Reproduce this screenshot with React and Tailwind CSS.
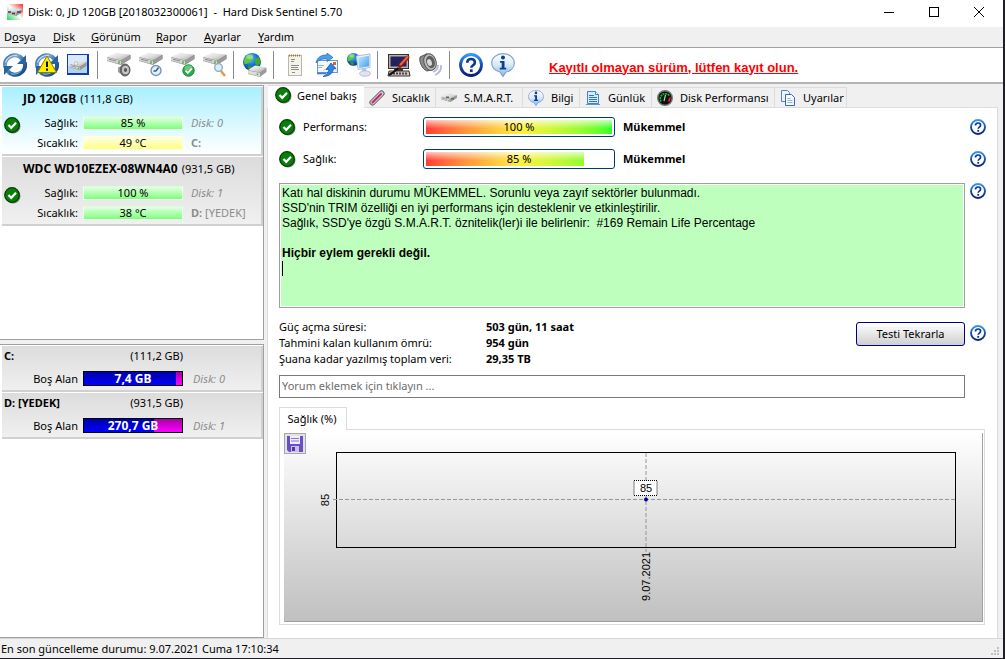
import { useState } from "react";

/* ── Shared gradients for the icon set ── */
function IconDefs() {
  return (
    <svg className="absolute h-0 w-0" aria-hidden="true">
      <defs>
        <linearGradient id="steel" x1="0" y1="0" x2="24" y2="24" gradientUnits="userSpaceOnUse">
          <stop offset="0" stopColor="#1d4e8c" />
          <stop offset="0.35" stopColor="#7ba9d4" />
          <stop offset="0.6" stopColor="#2b659f" />
          <stop offset="1" stopColor="#123f7c" />
        </linearGradient>
        <linearGradient id="metal" x1="0" y1="0" x2="1" y2="1">
          <stop offset="0" stopColor="#ffffff" />
          <stop offset="0.5" stopColor="#dcdcdc" />
          <stop offset="1" stopColor="#a4a4a4" />
        </linearGradient>
        <radialGradient id="ocean" cx="0.4" cy="0.3" r="0.75">
          <stop offset="0" stopColor="#6cc4ff" />
          <stop offset="0.5" stopColor="#1573dd" />
          <stop offset="1" stopColor="#062a7c" />
        </radialGradient>
        <linearGradient id="ring" x1="0" y1="0" x2="0" y2="1">
          <stop offset="0" stopColor="#2f9cf0" />
          <stop offset="0.5" stopColor="#1450ae" />
          <stop offset="1" stopColor="#0a1f78" />
        </linearGradient>
        <linearGradient id="screen" x1="0" y1="0" x2="1" y2="1">
          <stop offset="0" stopColor="#c9ecff" />
          <stop offset="1" stopColor="#3f9dec" />
        </linearGradient>
        <linearGradient id="bubble" x1="0" y1="0" x2="0" y2="1">
          <stop offset="0" stopColor="#ffffff" />
          <stop offset="0.5" stopColor="#d9e9f8" />
          <stop offset="1" stopColor="#7fb4e6" />
        </linearGradient>
      </defs>
    </svg>
  );
}

function Drive() {
  return (
    <g>
      <path d="M0 4.500 9 .500l14.500 1.500v4L14 12 0 8z" fill="#8a8a8a" />
      <path d="M0 4 9 0l14.500 1.500L14 7.500z" fill="url(#metal)" />
      <path d="M0 4.500 14 8v3.500L0 7.500z" fill="#d4d4d4" />
      <path d="M14 8 23.500 2v3.500L14 11.500z" fill="#9b9b9b" />
      <path d="M2 6.200 9 8" stroke="#8a8a8a" />
      <path d="M12 8.200v2.500" stroke="#3cb832" strokeWidth="1.500" />
    </g>
  );
}

function Globe() {
  return (
    <g>
      <circle cx="8" cy="8" r="8" fill="url(#ocean)" />
      <path d="M2 4C4 1 8 .5 9 1.500L7.500 4l1.500 2-4 3-3.500 1C.5 8 .8 5.500 2 4z" fill="#5fc83c" />
      <path d="M10.500 5 14 3.500c1.500 2 2 4.500 1.500 6L13 12l-2-2.500z" fill="#43a82b" />
      <path d="M5 11l3.500 1L8 15.500C6 15.200 4.500 14 4 13z" fill="#379422" />
      <ellipse cx="6" cy="3.500" rx="3" ry="2" fill="#fff" opacity="0.35" />
    </g>
  );
}

function Icon24({ children }) {
  return (
    <svg width="24" height="24" viewBox="0 0 24 24" fill="none" aria-hidden="true">
      {children}
    </svg>
  );
}

function CycleArrows() {
  return (
    <g>
      <path d="M2.300 14.500A9.800 9.800 0 0 1 19.500 6" stroke="url(#steel)" strokeWidth="4.200" />
      <path d="M21.700 9.500A9.800 9.800 0 0 1 4.500 18" stroke="url(#steel)" strokeWidth="4.200" />
      <path d="M23 2v9h-9z" fill="#2a639f" />
      <path d="M1 22v-9h9z" fill="#2a639f" />
      <path d="M2.500 9.500C4 4.500 9 1.800 14 2.500" stroke="#c3daf0" strokeWidth="1.200" />
      <path d="M8 20.800c4 1 8-.3 10.500-3.500" stroke="#9fc3e4" strokeWidth="1" />
    </g>
  );
}

function RefreshIcon() {
  return <Icon24><CycleArrows /></Icon24>;
}

function RefreshWarnIcon() {
  return (
    <Icon24>
      <CycleArrows />
      <path d="M12 3 21.500 19.500h-19z" fill="#ffed00" stroke="#8a8000" />
      <path d="M12 8.500v5.500M12 15.500v2.200" stroke="#111" strokeWidth="2" />
    </Icon24>
  );
}

function DriveFrameIcon() {
  return (
    <Icon24>
      <rect x="0" y="1" width="22" height="21" fill="#0d3fa6" />
      <rect x="1" y="2" width="19" height="18" fill="#b4d0f4" />
      <path d="M1 2h19v6L1 13z" fill="#d9e9fc" />
      <g transform="translate(3 8) scale(.7 .78)"><Drive /></g>
      <circle cx="9" cy="10.500" r="1.800" fill="#eee" stroke="#999" strokeWidth="0.500" />
    </Icon24>
  );
}

function DriveSoundIcon() {
  return (
    <Icon24>
      <Drive />
      <ellipse cx="18" cy="17" rx="5" ry="6" fill="#6d6d6d" stroke="#555" />
      <ellipse cx="18.500" cy="17" rx="3.500" ry="4.300" fill="#c6c6c6" />
      <ellipse cx="18.500" cy="17" rx="1.600" ry="2" fill="#555" />
      <path d="m11 14.500 2-1v7l-2-1.500z" fill="#999" />
    </Icon24>
  );
}

function DriveClockIcon() {
  return (
    <Icon24>
      <Drive />
      <circle cx="17" cy="17.500" r="5" fill="#e3f1fd" stroke="#7d95ad" strokeWidth="1.400" />
      <path d="M17 18l2.500-3.500M17 18h-2.500" stroke="#1f5c9e" strokeWidth="1.300" />
    </Icon24>
  );
}

function DriveCheckIcon() {
  return (
    <Icon24>
      <Drive />
      <circle cx="17.500" cy="17.500" r="5.700" fill="#2fa84f" stroke="#1c7d37" />
      <ellipse cx="17.500" cy="15" rx="4" ry="2.800" fill="#8be3a3" opacity="0.600" />
      <path d="m14.500 17.500 2.300 2.500 4-4.500" stroke="#fff" strokeWidth="1.800" />
    </Icon24>
  );
}

function DriveSearchIcon() {
  return (
    <Icon24>
      <Drive />
      <path d="m18 18 4 5" stroke="#e79c3c" strokeWidth="2.500" />
      <circle cx="15.500" cy="14.500" r="3.800" fill="#d5efff" stroke="#93a7b6" strokeWidth="1.300" />
    </Icon24>
  );
}

function GlobeDriveIcon() {
  return (
    <Icon24>
      <g transform="scale(1.12)"><Globe /></g>
      <path d="M5 17.500 12 13l11.500 2v4L17 24 5 21z" fill="#9a9a9a" />
      <path d="M5 17 12 12.500l11.500 2L17 19.500z" fill="url(#metal)" />
      <path d="M5 17.500l12 2.500v3.500L5 20.500z" fill="#dcdcdc" />
      <path d="M14.500 20.500v1.500" stroke="#3cb832" strokeWidth="1.500" />
    </Icon24>
  );
}

function NotepadIcon() {
  return (
    <Icon24>
      <rect x="5.500" y="2.500" width="13" height="20" fill="#f4f4ea" stroke="#b8b8ac" />
      <path d="M6 2.500h12" stroke="#a8762c" strokeWidth="2" strokeDasharray="1 1" />
      <path d="M8 6.500h4M8 8.500h3M8 12.500h8M8 14.500h7M8 16.500h8M9 19.500h3" stroke="#8b8b8b" />
    </Icon24>
  );
}

function MailIcon() {
  return (
    <Icon24>
      <rect x="2.500" y="7.500" width="20" height="12" fill="#f5f9fe" stroke="#6f97c4" />
      <path d="M3 12.500h6M3 14.500h4" stroke="#9db6d0" />
      <path d="m8 18 7-5 7 5" stroke="#b7cbe0" />
      <rect x="18" y="9" width="3" height="3" fill="#e05a33" />
      <path d="M1 10C2 4 7 1.500 12 2V0l6 4.500-6 4V6C8 5.500 4 6.500 1 10z" fill="#4aa0ec" stroke="#2069b5" strokeWidth="0.700" />
      <path d="M8 23.500c6 0 10-3 10.500-8h2.500L16 10l-5 6.500h3C13.500 19 11.500 22 8 23.500z" fill="#2a86e8" stroke="#0f4ea6" strokeWidth="0.700" />
      <path d="M2 20.500h9" stroke="#2a7fe0" strokeWidth="1.500" />
    </Icon24>
  );
}

function NetworkIcon() {
  return (
    <Icon24>
      <g transform="scale(.8)"><Globe /></g>
      <path d="M9.500 3 23 1v13.500L11 16.500z" fill="#eef4fb" stroke="#a9bfdb" />
      <path d="M11 4.500 22 2.800v10.500L12.200 15z" fill="url(#screen)" />
      <path d="m15 16 4-.5.500 4-4 .5z" fill="#b8c4d6" />
      <ellipse cx="18" cy="20.500" rx="5.500" ry="2.800" fill="#dfe2f2" stroke="#a6acca" strokeWidth="0.700" />
    </Icon24>
  );
}

function MonitorPenIcon() {
  return (
    <Icon24>
      <rect x="1.500" y="1.500" width="20" height="14" fill="#b8b2ae" stroke="#38302c" />
      <rect x="3.500" y="3.500" width="16" height="10" fill="#24215c" />
      <path d="M7 16h9v2H7z" fill="#3e3638" />
      <path d="M2 18h20l1 5H1z" fill="#cfc8c2" stroke="#38302c" />
      <path d="M3 20.500h18" stroke="#4a4140" strokeWidth="2" strokeDasharray="2 1" />
      <path d="M13 13 20.500 4.500" stroke="#8c1d10" strokeWidth="4" strokeLinecap="round" />
      <path d="M13.500 11.500 20.500 4" stroke="#f0623d" strokeWidth="2" strokeLinecap="round" />
      <path d="M2 22C6 20 8 18 11.500 15" stroke="#111" strokeWidth="2" />
    </Icon24>
  );
}

function SpeakerIcon() {
  return (
    <Icon24>
      <path d="M14 19c3.500-1 5-3.500 5-7M16 22c4.500-2 6.500-5 6-10" stroke="#b4bad8" strokeWidth="1.800" />
      <path d="M1 4 8 .700l4 16.300-4 1C3 16 0 9 1 4z" fill="#8c8c8c" stroke="#555" />
      <ellipse cx="11" cy="9" rx="6" ry="8.500" fill="#bdbdbd" stroke="#555" transform="rotate(-18 11 9)" />
      <ellipse cx="11.500" cy="9" rx="4.300" ry="6.300" fill="#5e5e5e" transform="rotate(-18 11.500 9)" />
      <ellipse cx="10.500" cy="9.500" rx="2.300" ry="3.500" fill="#d8d8d8" transform="rotate(-18 10.500 9.500)" />
    </Icon24>
  );
}

function HelpIcon({ size = 16 }) {
  return (
    <svg width={size} height={size} viewBox="0 0 24 24" fill="none" aria-hidden="true">
      <circle cx="12" cy="12" r="10.500" fill="#fff" stroke="url(#ring)" strokeWidth="2.800" />
      <path d="M8.200 9.700C8.200 7.200 9.800 6 12 6s3.900 1.300 3.900 3.400c0 2.800-3.600 2.800-3.600 5.400" stroke="#10368f" strokeWidth="2.600" />
      <rect x="10.900" y="16.300" width="2.800" height="2.800" fill="#10368f" />
    </svg>
  );
}

function InfoIcon({ size = 24 }) {
  return (
    <svg width={size} height={size} viewBox="0 0 24 24" fill="none" aria-hidden="true">
      <path d="M12 .7c6.500 0 11.300 4 11.300 9.300 0 4.500-3.500 8-8.300 9L12 23.500 9 19C4.300 18 .7 14.500.7 10 .7 4.700 5.500.7 12 .7z" fill="url(#bubble)" stroke="#7ea3cb" strokeWidth="1.200" />
      <circle cx="12" cy="4.400" r="2" fill="#0b3c9a" />
      <path d="M9 8h4.500v6.800h1.700v1.700H8.800v-1.700h1.900V9.700H9z" fill="#0b3c9a" />
    </svg>
  );
}

function CheckBadge() {
  return (
    <svg className="shrink-0" width="17" height="17" viewBox="0 0 17 17" fill="none" aria-hidden="true">
      <circle cx="9" cy="9" r="7.500" fill="#777" />
      <circle cx="8" cy="8" r="7.300" fill="#087f08" stroke="#033d03" strokeWidth="1.200" />
      <path d="m4.500 8 2.700 2.800L12 5.800" stroke="#fff" strokeWidth="2.200" />
    </svg>
  );
}

function AppIcon() {
  return (
    <svg width="16" height="16" viewBox="0 0 16 16" aria-hidden="true">
      <linearGradient id="app" x1="0" y1="1" x2="1" y2="0">
        <stop offset="0" stopColor="#22d355" />
        <stop offset="0.5" stopColor="#ffffff" />
        <stop offset="1" stopColor="#ff2d2d" />
      </linearGradient>
      <rect width="16" height="16" fill="url(#app)" />
      <g transform="translate(0 4) scale(.66)"><Drive /></g>
      <path d="M1 8h3M5 9.500h3M10 8h4" stroke="#444" strokeWidth="1.500" />
    </svg>
  );
}

function ThermoIcon() {
  return (
    <svg width="16" height="16" viewBox="0 0 16 16" fill="none" aria-hidden="true">
      <path d="M3.500 12.500 12.500 3.500" stroke="#555" strokeWidth="6" strokeLinecap="round" />
      <path d="M3.500 12.500 12.500 3.500" stroke="#cfcad2" strokeWidth="4.400" strokeLinecap="round" />
      <path d="M3.500 12.500 12 4" stroke="#c02672" strokeWidth="2" strokeLinecap="round" />
    </svg>
  );
}

function SmartIcon() {
  return (
    <svg width="16" height="16" viewBox="0 0 16 16" aria-hidden="true">
      <g transform="translate(0 4) scale(.67)"><Drive /></g>
      <path d="M5 6.500h3v1.500H5zM10 8h3v1.500h-3z" fill="#666" />
    </svg>
  );
}

function LogIcon() {
  return (
    <svg width="16" height="16" viewBox="0 0 16 16" fill="none" aria-hidden="true">
      <path d="M2.500 1.500h8l3 3v9h-11z" fill="#d6ebfc" stroke="#3b86c8" />
      <path d="M10.500 1.500v3h3" fill="#fff" stroke="#3b86c8" />
      <path d="M4 5.500h5M4 7.500h8M4 9.500h8M4 11.500h8" stroke="#2877c0" />
      <path d="M1 14.500h14" stroke="#5a97cf" />
    </svg>
  );
}

function GaugeIcon() {
  return (
    <svg width="16" height="16" viewBox="0 0 16 16" fill="none" aria-hidden="true">
      <circle cx="8" cy="8" r="7.300" fill="#111" stroke="#777" strokeWidth="1.400" />
      <path d="M4 11.500A5 5 0 1 1 12.500 6" stroke="#16b834" strokeWidth="1.600" strokeDasharray="2 .6" />
      <path d="M12.800 7.500A5 5 0 0 1 11.500 11.500" stroke="#e22" strokeWidth="1.800" />
      <path d="m7 11 1.500-6" stroke="#9be89b" strokeWidth="1.200" />
    </svg>
  );
}

function CopyIcon() {
  return (
    <svg width="16" height="16" viewBox="0 0 16 16" fill="none" aria-hidden="true">
      <path d="M1.500.5h6l2 2v9h-8z" fill="#eaf2fc" stroke="#5b7fb8" />
      <path d="M5.500 4.500h6l3 3v8h-9z" fill="#f6faff" stroke="#3f66a8" />
      <path d="M7.500 8.500h3M7.500 10.500h5M7.500 12.500h5" stroke="#8eb3e4" />
    </svg>
  );
}

function FloppyIcon() {
  return (
    <svg width="16" height="16" viewBox="0 0 16 16" aria-hidden="true">
      <path d="M0 0h16v16H2l-2-2z" fill="#6a4fc4" />
      <path d="M3 0h10v8H3z" fill="#f0edfb" />
      <path d="M4 2h8v1H4zM4 4.500h8v1H4z" fill="#8a78d0" />
      <path d="M4 10h8v6H4z" fill="#c9c0ea" />
      <path d="M5 11h3v4H5z" fill="#5038a5" />
    </svg>
  );
}

const MENU = [
  { label: "Dosya", key: 1, width: "w-[49px]" },
  { label: "Disk", key: 0, width: "w-[38px]" },
  { label: "Görünüm", key: 0, width: "w-[65px]" },
  { label: "Rapor", key: 0, width: "w-[48px]" },
  { label: "Ayarlar", key: 0, width: "w-[54px]" },
  { label: "Yardım", key: 0, width: "w-[50px]" },
];

const TOOLS = [
  [["Yenile", RefreshIcon], ["Uyarı", RefreshWarnIcon], ["Disk", DriveFrameIcon]],
  [["Ses", DriveSoundIcon], ["Zaman", DriveClockIcon], ["Test", DriveCheckIcon], ["Ara", DriveSearchIcon]],
  [["Ağ diski", GlobeDriveIcon]],
  [["Rapor", NotepadIcon], ["Posta", MailIcon], ["Ağ", NetworkIcon]],
  [["Ayarlar", MonitorPenIcon], ["Uyarı sesi", SpeakerIcon]],
  [["Yardım", () => <HelpIcon size={24} />], ["Bilgi", InfoIcon]],
];

const DISKS = [
  { name: "JD 120GB", size: "(111,8 GB)", health: "85 %", temp: "49 °C", warm: true, no: "Disk: 0", drive: "C:", label: "" },
  { name: "WDC WD10EZEX-08WN4A0", size: "(931,5 GB)", health: "100 %", temp: "38 °C", warm: false, no: "Disk: 1", drive: "D:", label: "[YEDEK]" },
];

const VOLUMES = [
  { name: "C:", size: "(111,2 GB)", free: "7,4 GB", used: 94, no: "Disk: 0" },
  { name: "D: [YEDEK]", size: "(931,5 GB)", free: "270,7 GB", used: 71, no: "Disk: 1" },
];

const TABS = [
  { label: "Genel bakış", icon: CheckBadge },
  { label: "Sıcaklık", icon: ThermoIcon, width: "w-[72px]" },
  { label: "S.M.A.R.T.", icon: SmartIcon, width: "w-[87px]" },
  { label: "Bilgi", icon: () => <InfoIcon size={16} />, width: "w-[57px]" },
  { label: "Günlük", icon: LogIcon, width: "w-[72px]" },
  { label: "Disk Performansı", icon: GaugeIcon, width: "w-[123px]" },
  { label: "Uyarılar", icon: CopyIcon, width: "w-[72px]" },
];

const STATS = [
  ["Güç açma süresi:", "503 gün, 11 saat"],
  ["Tahmini kalan kullanım ömrü:", "954 gün"],
  ["Şuana kadar yazılmış toplam veri:", "29,35 TB"],
];

function TitleBar() {
  return (
    <header className="flex h-[27px] shrink-0 items-center pb-1 pl-[7px]">
      <AppIcon />
      <h1 className="ml-[5px] flex-1 whitespace-pre">
        {"Disk: 0, JD 120GB [2018032300061]  -  Hard Disk Sentinel 5.70"}
      </h1>
      <div className="flex gap-[25px] pr-[14px]">
        <button aria-label="Küçült" className="flex h-5 w-5 items-center justify-center">
          <svg width="10" height="10"><path d="M0 5.500h10" stroke="#000" /></svg>
        </button>
        <button aria-label="Büyüt" className="flex h-5 w-5 items-center justify-center">
          <svg width="10" height="10"><rect x="0.500" y="0.500" width="9" height="9" fill="none" stroke="#000" /></svg>
        </button>
        <button aria-label="Kapat" className="flex h-5 w-5 items-center justify-center">
          <svg width="10" height="10"><path d="m0 0 10 10M10 0 0 10" stroke="#000" /></svg>
        </button>
      </div>
    </header>
  );
}

function MenuBar() {
  return (
    <nav className="flex h-[21px] shrink-0 items-center border-b border-[#a0a0a0] bg-[#f0f0f0] pb-[2px] pl-1">
      {MENU.map((m) => (
        <button key={m.label} className={`${m.width} whitespace-nowrap text-left`}>
          {m.label.slice(0, m.key)}
          <u>{m.label[m.key]}</u>
          {m.label.slice(m.key + 1)}
        </button>
      ))}
    </nav>
  );
}

function Toolbar() {
  return (
    <div className="flex h-9 shrink-0 items-center border-b-2 border-[#b4b4b4]">
      {TOOLS.map((group, i) => (
        <div key={i} className="flex items-center">
          {i > 0 && <span className="ml-px mr-[6px] h-7 w-px bg-[#8c8c8c]" />}
          {group.map(([label, Glyph]) => (
            <button key={label} aria-label={label} className="flex h-8 w-8 items-center pl-[3px]">
              <Glyph />
            </button>
          ))}
        </div>
      ))}
      <a href="#kayit" className="ml-[29px] pt-1 font-['Liberation_Sans',sans-serif] text-[13px] font-bold text-[#ff0000] underline">
        Kayıtlı olmayan sürüm, lütfen kayıt olun.
      </a>
    </div>
  );
}

function MiniBar({ value, warm }) {
  return (
    <span
      className={`flex h-[14px] w-[100px] items-center justify-center border border-white/70 bg-linear-to-b ${
        warm ? "from-[#ffffe4] to-[#ffff78]" : "from-[#e2ffe2] to-[#78ff78]"
      }`}
    >
      {value}
    </span>
  );
}

function DiskCard({ disk, selected, onSelect }) {
  return (
    <button
      onClick={onSelect}
      className={`mb-px flex h-[69px] w-full items-center border-b-2 border-r-2 border-[#d0d0d0] pl-[2px] text-left ${
        selected ? "bg-linear-to-b from-[#a8efff] to-white" : "bg-linear-to-b from-[#dcdcdc] to-[#f0f0f0]"
      }`}
    >
      <span className="flex w-[19px] pt-[10px]"><CheckBadge /></span>
      <span className="flex-1 whitespace-nowrap">
        <span className="flex h-6 items-center gap-1 pb-1"><b className="text-[12px]">{disk.name}</b> {disk.size}</span>
        {[
          ["Sağlık:", <MiniBar value={disk.health} />, <i>{disk.no}</i>],
          ["Sıcaklık:", <MiniBar value={disk.temp} warm={disk.warm} />, <span><b>{disk.drive}</b> {disk.label}</span>],
        ].map(([name, bar, note]) => (
          <span key={name} className="flex h-5 items-center">
            <span className="mr-[5px] w-[55px] text-right">{name}</span>
            {bar}
            <span className="ml-2 text-[#8c8c8c]">{note}</span>
          </span>
        ))}
      </span>
    </button>
  );
}

function VolumeCard({ vol }) {
  return (
    <div className="mb-px border-b-2 border-r-2 border-[#d0d0d0] bg-linear-to-b from-[#dcdcdc] to-[#f0f0f0] pb-px pl-[2px]">
      <div className="flex h-[21px] w-[179px] items-center justify-between pb-[2px]">
        <b>{vol.name}</b>
        <span>{vol.size}</span>
      </div>
      <div className="flex h-[22px] items-center">
        <span className="mr-[5px] w-[74px] text-right">Boş Alan</span>
        <span className="relative flex h-[15px] w-[100px] items-center justify-center border border-black bg-linear-to-b from-[#a800a8] to-[#ff00ff] text-[12px] font-bold text-white">
          <span
            className="absolute inset-y-0 left-0 bg-linear-to-b from-[#0000a8] to-[#0000ff]"
            style={{ width: `${vol.used}%` }}
          />
          <span className="relative">{vol.free}</span>
        </span>
        <i className="ml-[10px] text-[#8c8c8c]">{vol.no}</i>
      </div>
    </div>
  );
}

function Sidebar() {
  const [selected, setSelected] = useState(0);

  return (
    <aside className="flex w-[264px] shrink-0 flex-col gap-1 bg-[#f0f0f0] pt-px">
      <div className="h-[255px] border-b border-r border-t border-[#a0a0a0] bg-white pl-[2px] pt-px">
        {DISKS.map((disk, i) => (
          <DiskCard key={disk.name} disk={disk} selected={i === selected} onSelect={() => setSelected(i)} />
        ))}
      </div>
      <div className="flex-1 border-b border-r border-t border-[#a0a0a0] bg-white pl-[2px] pt-px">
        {VOLUMES.map((vol) => (
          <VolumeCard key={vol.name} vol={vol} />
        ))}
      </div>
    </aside>
  );
}

function TabStrip() {
  const [active, setActive] = useState(0);

  return (
    <div role="tablist" className="flex h-6 shrink-0 items-end bg-[#f0f0f0] pl-px">
      {TABS.map(({ label, icon: Glyph, width }, i) =>
        i === active ? (
          <button key={label} role="tab" aria-selected="true" className="flex h-[23px] w-[96px] items-center gap-[5px] whitespace-nowrap border-t border-[#dcdcdc] bg-white pl-[7px] pb-1">
            <Glyph />
            {label}
          </button>
        ) : (
          <button
            key={label}
            role="tab"
            aria-selected="false"
            onClick={() => setActive(i)}
            className={`${width ?? "w-[96px]"} flex h-[21px] items-center gap-[7px] whitespace-nowrap border-b border-r border-t border-[#dcdcdc] pl-[5px]`}
          >
            <Glyph />
            {label}
          </button>
        )
      )}
      <span className="flex-1 border-b border-[#dcdcdc]" />
    </div>
  );
}

function ScoreRow({ label, value }) {
  return (
    <div className="flex h-8 items-center">
      <CheckBadge />
      <span className="ml-[7px] w-[120px] pb-px">{label}</span>
      <span className="relative h-5 w-[192px] rounded-[3px] border border-[#003c74] bg-white p-[2px]">
        <span className="block h-full overflow-hidden" style={{ width: `${value}%` }}>
          <span className="relative block h-full w-[186px] bg-linear-to-r from-[#ff3838] via-[#fff040] to-[#28ff28]">
            <span className="absolute inset-0 bg-linear-to-b from-white/70 to-transparent to-60%" />
          </span>
        </span>
        <span className="absolute inset-0 flex items-center justify-center pb-px">{value} %</span>
      </span>
      <b className="ml-2 flex-1 pb-px">Mükemmel</b>
      <button aria-label={`${label} yardım`}><HelpIcon /></button>
    </div>
  );
}

function HealthChart() {
  return (
    <div className="relative flex-1 border-b border-r border-[#a0a0a0] bg-linear-to-b from-white to-[#c0c0c0] pl-[52px] pr-[26px] pt-[19px]">
      <button aria-label="Kaydet" className="absolute left-0 top-0 flex h-[21px] w-[22px] items-center justify-center border border-[#a8a8a8] bg-[#e2e2e2]">
        <FloppyIcon />
      </button>
      <div className="relative h-24 border border-black">
        <svg className="absolute inset-0 h-full w-full overflow-visible font-['Liberation_Sans',sans-serif] text-[11px]">
          <line x1="-4" x2="100%" y1="46.500" y2="46.500" stroke="#969696" strokeDasharray="4 2" />
          <svg x="50%" y="0" className="overflow-visible">
            <line x1="0" x2="0" y1="0" y2="99" stroke="#969696" strokeDasharray="4 2" />
            <rect x="-12" y="27.500" width="23" height="15" fill="#fff" stroke="#000" strokeDasharray="1 1" />
            <text x="0" y="39" textAnchor="middle">85</text>
            <circle cx="0" cy="46.500" r="2" fill="#0000a0" />
            <text transform="translate(4 99) rotate(-90)" textAnchor="end">9.07.2021</text>
          </svg>
          <text transform="translate(-8 47) rotate(-90)" textAnchor="middle">85</text>
        </svg>
      </div>
    </div>
  );
}

function Overview() {
  return (
    <section className="flex min-h-0 flex-1 flex-col bg-white pb-[13px] pl-[11px] pr-[11px] pt-[3px]">
      <ScoreRow label="Performans:" value={100} />
      <ScoreRow label="Sağlık:" value={85} />

      <div className="mt-2 flex gap-[5px]">
        <div
          role="textbox"
          aria-readonly="true"
          tabIndex={0}
          className="h-[125px] flex-1 border border-[#a0a0a0] bg-[#beffbe] p-[2px] font-['Liberation_Sans',sans-serif] text-[12px] leading-[15px] outline-1 -outline-offset-2 outline-white"
        >
          <p>Katı hal diskinin durumu MÜKEMMEL. Sorunlu veya zayıf sektörler bulunmadı.</p>
          <p>SSD'nin TRIM özelliği en iyi performans için desteklenir ve etkinleştirilir.</p>
          <p className="whitespace-pre">{"Sağlık, SSD'ye özgü S.M.A.R.T. öznitelik(ler)i ile belirlenir:  #169 Remain Life Percentage"}</p>
          <p className="mt-[15px] font-bold">Hiçbir eylem gerekli değil.</p>
          <span className="block h-[15px] w-px bg-black" />
        </div>
        <button aria-label="Durum yardım" className="self-start"><HelpIcon /></button>
      </div>

      <div className="mt-[11px] flex items-start">
        <dl className="flex-1 leading-4">
          {STATS.map(([name, value]) => (
            <div key={name} className="flex">
              <dt className="w-[207px] whitespace-nowrap">{name}</dt>
              <dd className="font-bold">{value}</dd>
            </div>
          ))}
        </dl>
        <button className="mr-[5px] mt-[3px] h-6 w-[109px] rounded-[3px] border border-[#000080] bg-linear-to-b from-white to-[#cfcfcf] pb-[2px]">
          Testi Tekrarla
        </button>
        <button aria-label="Test yardım" className="mt-[6px]"><HelpIcon /></button>
      </div>

      <input
        aria-label="Yorum"
        placeholder="Yorum eklemek için tıklayın ..."
        className="mr-[21px] mt-2 h-[23px] shrink-0 border border-[#7a7a7a] px-[2px] pb-[2px] placeholder:text-[#6d6d6d]"
      />

      <div role="tablist" className="mt-[9px] flex">
        <button role="tab" aria-selected="true" className="z-10 -mb-px h-[23px] w-[68px] border border-b-0 border-[#dcdcdc] bg-white pb-[2px] pr-[2px]">
          Sağlık (%)
        </button>
      </div>
      <div className="mr-px flex flex-1 flex-col border border-[#dcdcdc] py-[2px] pl-1 pr-px pt-[3px]">
        <HealthChart />
      </div>
    </section>
  );
}

function StatusBar() {
  return (
    <footer className="flex h-5 shrink-0 items-center justify-between border-t border-[#d7d7d7] bg-[#f0f0f0] px-px">
      <span>En son güncelleme durumu: 9.07.2021 Cuma 17:10:34</span>
      <svg className="self-end" width="11" height="11" fill="#bfbfbf" aria-hidden="true">
        <path d="M6 0h2v2H6zM3 3h2v2H3zM6 3h2v2H6zM0 6h2v2H0zM3 6h2v2H3zM6 6h2v2H6z" />
      </svg>
    </footer>
  );
}

export default function App() {
  return (
    <div className="flex h-screen flex-col border-b border-r-2 border-[#202024] bg-white font-['Noto_Sans',sans-serif] text-[11px] leading-[15px] text-black">
      <IconDefs />
      <TitleBar />
      <MenuBar />
      <Toolbar />
      <div className="flex min-h-0 flex-1">
        <Sidebar />
        <main className="flex min-w-0 flex-1 flex-col bg-[#f0f0f0] pl-[3px] pr-[5px]">
          <TabStrip />
          <div className="flex min-h-0 flex-1 flex-col border-x border-[#dcdcdc]">
            <Overview />
          </div>
        </main>
      </div>
      <StatusBar />
    </div>
  );
}
